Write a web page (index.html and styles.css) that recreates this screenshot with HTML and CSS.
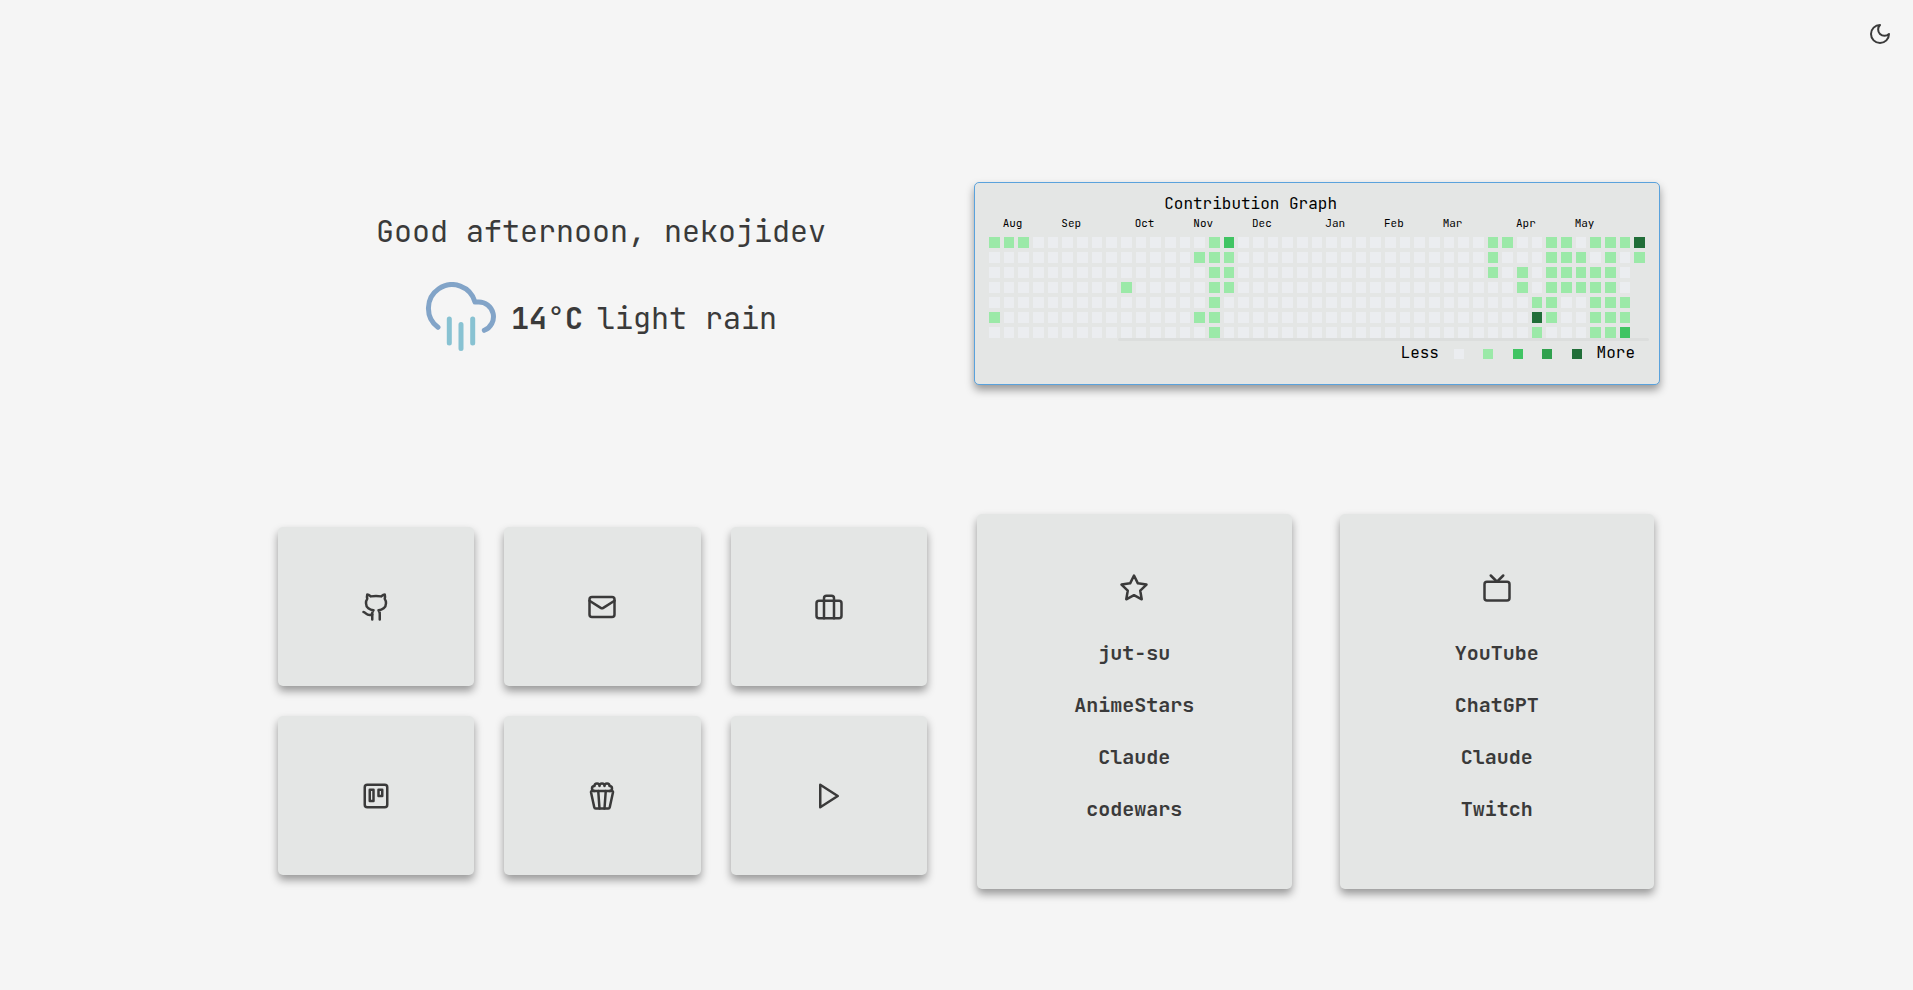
FILE: index.html
```html
<!DOCTYPE html>
<html lang="en">
<head>
<meta charset="utf-8">
<meta name="viewport" content="width=device-width, initial-scale=1">
<title>Startpage</title>
<link rel="stylesheet" href="styles.css">
</head>
<body>
<header class="topbar">
  <button class="theme-toggle" type="button" aria-label="Toggle theme">
    <svg class="icon icon-small" viewBox="0 0 24 24"><path d="M12 3a6 6 0 0 0 9 9 9 9 0 1 1-9-9Z"/></svg>
  </button>
</header>
<main>
  <section class="intro">
    <div class="welcome">
      <h1 class="greeting">Good afternoon, nekojidev</h1>
      <div class="weather">
        <svg class="weather-icon" viewBox="0 0 72 72" aria-hidden="true">
          <path class="cloud" d="M13 45.3A23.7 23.7 0 1 1 50 20H53A14.7 14.7 0 0 1 59.3 48.3"/>
          <path class="rain" d="M24.3 37V61M36 42.5V66.5M47.7 37V61"/>
        </svg>
        <p class="conditions"><strong>14°C</strong><span>light rain</span></p>
      </div>
    </div>
    <section class="graph" aria-labelledby="graph-title">
      <h2 class="graph-title" id="graph-title">Contribution Graph</h2>
      <div class="months" id="months"></div>
      <div class="weeks" id="weeks"></div>
      <div class="track"></div>
      <p class="legend">Less <i class="swatch level-0"></i> <i class="swatch level-1"></i> <i class="swatch level-2"></i> <i class="swatch level-3"></i> <i class="swatch level-4"></i> More</p>
    </section>
  </section>
  <section class="links">
    <nav class="tiles" aria-label="Shortcuts">
      <a class="card tile" href="#github" aria-label="GitHub"><svg class="icon" viewBox="0 0 24 24"><path d="M15 22v-4a4.8 4.8 0 0 0-1-3.5c3 0 6-2 6-5.5.08-1.25-.27-2.48-1-3.5.28-1.15.28-2.35 0-3.5 0 0-1 0-3 1.5-2.64-.5-5.36-.5-8 0C6 2 5 2 5 2c-.3 1.15-.3 2.35 0 3.5A5.403 5.403 0 0 0 4 9c0 3.5 3 5.5 6 5.5-.39.49-.68 1.05-.85 1.65-.17.6-.22 1.23-.15 1.85v4"/><path d="M9 18c-4.51 2-5-2-7-2"/></svg></a>
      <a class="card tile" href="#mail" aria-label="Mail"><svg class="icon" viewBox="0 0 24 24"><rect x="2" y="4" width="20" height="16" rx="2"/><path d="m22 7-8.97 5.7a1.94 1.94 0 0 1-2.06 0L2 7"/></svg></a>
      <a class="card tile" href="#work" aria-label="Work"><svg class="icon" viewBox="0 0 24 24"><rect x="2" y="7" width="20" height="14" rx="2"/><path d="M16 21V5a2 2 0 0 0-2-2h-4a2 2 0 0 0-2 2v16"/></svg></a>
      <a class="card tile" href="#trello" aria-label="Trello"><svg class="icon" viewBox="0 0 24 24"><rect x="3" y="3" width="18" height="18" rx="2"/><rect x="7" y="7" width="3" height="9"/><rect x="14" y="7" width="3" height="5"/></svg></a>
      <a class="card tile" href="#movies" aria-label="Movies"><svg class="icon" viewBox="0 0 24 24"><path d="M18 8a2 2 0 0 0 0-4 2 2 0 0 0-4 0 2 2 0 0 0-4 0 2 2 0 0 0-4 0 2 2 0 0 0 0 4"/><path d="M10 22 9 8"/><path d="m14 22 1-14"/><path d="M20 8c.5 0 .9.4.8 1l-2.6 12c-.1.5-.7 1-1.2 1H7c-.6 0-1.1-.4-1.2-1L3.2 9c-.1-.6.3-1 .8-1Z"/></svg></a>
      <a class="card tile" href="#play" aria-label="Play"><svg class="icon" viewBox="0 0 24 24"><path d="M5 3l14 9-14 9Z"/></svg></a>
    </nav>
    <div class="lists">
      <nav class="card list" aria-label="Favourites">
        <svg class="icon" viewBox="0 0 24 24"><path d="M12 2l3.09 6.26L22 9.27l-5 4.87 1.18 6.88L12 17.77l-6.18 3.25L7 14.14 2 9.27l6.91-1.01Z"/></svg>
        <ul>
          <li><a href="#jut-su">jut-su</a></li>
          <li><a href="#animestars">AnimeStars</a></li>
          <li><a href="#claude">Claude</a></li>
          <li><a href="#codewars">codewars</a></li>
        </ul>
      </nav>
      <nav class="card list" aria-label="Media">
        <svg class="icon" viewBox="0 0 24 24"><rect x="2" y="7" width="20" height="15" rx="2"/><path d="m17 2-5 5-5-5"/></svg>
        <ul>
          <li><a href="#youtube">YouTube</a></li>
          <li><a href="#chatgpt">ChatGPT</a></li>
          <li><a href="#claude-chat">Claude</a></li>
          <li><a href="#twitch">Twitch</a></li>
        </ul>
      </nav>
    </div>
  </section>
</main>
<script src="graph.js"></script>
</body>
</html>
```

FILE: styles.css
```css
:root {
  --bg: #f5f5f5;
  --card: #e4e6e5;
  --fg: #3a3a3a;
  --accent: #5aa2dc;
  --shadow: 0 5px 8px rgba(0, 0, 0, 0.38);
}

* {
  box-sizing: border-box;
  margin: 0;
  padding: 0;
}

body {
  min-height: 100vh;
  background: var(--bg);
  color: var(--fg);
  font-family: "JetBrains Mono", "DejaVu Sans Mono", monospace;
}

a {
  color: inherit;
  text-decoration: none;
}

.topbar {
  display: flex;
  justify-content: flex-end;
  padding: 22px 21px 0;
}

.theme-toggle {
  display: flex;
  border: 0;
  background: none;
  color: inherit;
  cursor: pointer;
}

.icon {
  display: block;
  width: 30px;
  height: 30px;
  fill: none;
  stroke: currentColor;
  stroke-width: 2;
  stroke-linecap: round;
  stroke-linejoin: round;
}

.icon-small {
  width: 24px;
  height: 24px;
}

main {
  display: grid;
  gap: 129px;
  padding: 136px 0 48px 278px;
}

.intro {
  display: grid;
  grid-template-columns: 646fr 686fr;
  gap: 50px;
  align-items: center;
  padding-right: 253px;
}

.welcome {
  display: flex;
  flex-direction: column;
  align-items: center;
  gap: 31px;
  padding-bottom: 3px;
}

.greeting {
  font-size: 30px;
  line-height: 40px;
  font-weight: 400;
}

.weather {
  display: flex;
  align-items: center;
  gap: 14px;
}

.weather-icon {
  width: 72px;
  height: 72px;
  fill: none;
  stroke-width: 5;
  stroke-linecap: round;
  stroke-linejoin: round;
}

.cloud {
  stroke: #82a4c8;
}

.rain {
  stroke: #88c2d2;
}

.conditions {
  display: flex;
  gap: 14px;
  font-size: 30px;
  line-height: 40px;
}

.graph {
  padding: 10px 10px 20px;
  border: 1px solid var(--accent);
  border-radius: 5px;
  background: var(--card);
  box-shadow: var(--shadow);
  color: #000;
}

.graph-title {
  width: 80%;
  font-size: 16px;
  line-height: 21px;
  font-weight: 400;
  text-align: center;
}

.months,
.weeks {
  display: grid;
  grid-template-columns: repeat(45, minmax(0, 1fr));
  column-gap: 4px;
  padding: 0 4px;
}

.months {
  padding: 0 5px 4px 3px;
  font-size: 11px;
  line-height: 19px;
  white-space: nowrap;
}

.weeks {
  grid-template-rows: repeat(7, 11px);
  grid-auto-flow: column;
  row-gap: 4px;
}

.track {
  width: 80%;
  height: 3px;
  margin-left: auto;
  border-radius: 2px;
  background: #dcdedd;
}

.legend {
  padding: 1px 14px 0 0;
  font-size: 16px;
  line-height: 22px;
  text-align: right;
}

.swatch {
  display: inline-block;
  width: 10px;
  height: 10px;
  margin: 0 5px;
  vertical-align: -1px;
}

.level-0 { background: #ebedf0; }
.level-1 { background: #9be9a8; }
.level-2 { background: #40c463; }
.level-3 { background: #30a14e; }
.level-4 { background: #216e39; }

.links {
  display: grid;
  grid-template-columns: 649fr 677fr;
  gap: 50px;
  align-items: center;
  padding-right: 259px;
}

.card {
  border-radius: 5px;
  background: var(--card);
  box-shadow: var(--shadow);
}

.tiles {
  display: grid;
  grid-template-columns: repeat(3, 1fr);
  gap: 30px;
  padding-bottom: 1px;
}

.tile {
  display: flex;
  align-items: center;
  justify-content: center;
  min-height: 159px;
}

.lists {
  display: grid;
  grid-template-columns: repeat(2, 1fr);
  gap: 48px;
}

.list {
  display: flex;
  flex-direction: column;
  align-items: center;
  gap: 24px;
  padding: 59px 16px 54px;
}

.list ul {
  list-style: none;
  text-align: center;
  font-size: 20px;
  line-height: 52px;
  font-weight: 600;
}
```

FILE: graph.js
```js
// One string per weekday, one digit per week; a space means no day yet.
const zeros = (n) => "0".repeat(n);
const rows = [
  "111" + zeros(12) + "12" + zeros(17) + "11001101114",
  zeros(14) + "111" + zeros(17) + "10001110101",
  zeros(15) + "11" + zeros(17) + "1010111110 ",
  zeros(9) + "1" + zeros(5) + "11" + zeros(17) + "0010111110 ",
  zeros(15) + "10" + zeros(17) + "0001100111 ",
  "1" + zeros(13) + "110" + zeros(17) + "0004100111 ",
  zeros(15) + "10" + zeros(17) + "0001000112 ",
];
const months = {
  Aug: 1, Sep: 5, Oct: 10, Nov: 14, Dec: 18,
  Jan: 23, Feb: 27, Mar: 31, Apr: 36, May: 40,
};

const monthsEl = document.getElementById("months");
for (const [name, week] of Object.entries(months)) {
  const label = document.createElement("span");
  label.textContent = name;
  label.style.gridColumn = week + 1;
  monthsEl.append(label);
}

const weeksEl = document.getElementById("weeks");
for (let week = 0; week < 45; week++) {
  for (const row of rows) {
    const cell = document.createElement("div");
    if (row[week] !== " ") cell.className = "level-" + row[week];
    weeksEl.append(cell);
  }
}
```
